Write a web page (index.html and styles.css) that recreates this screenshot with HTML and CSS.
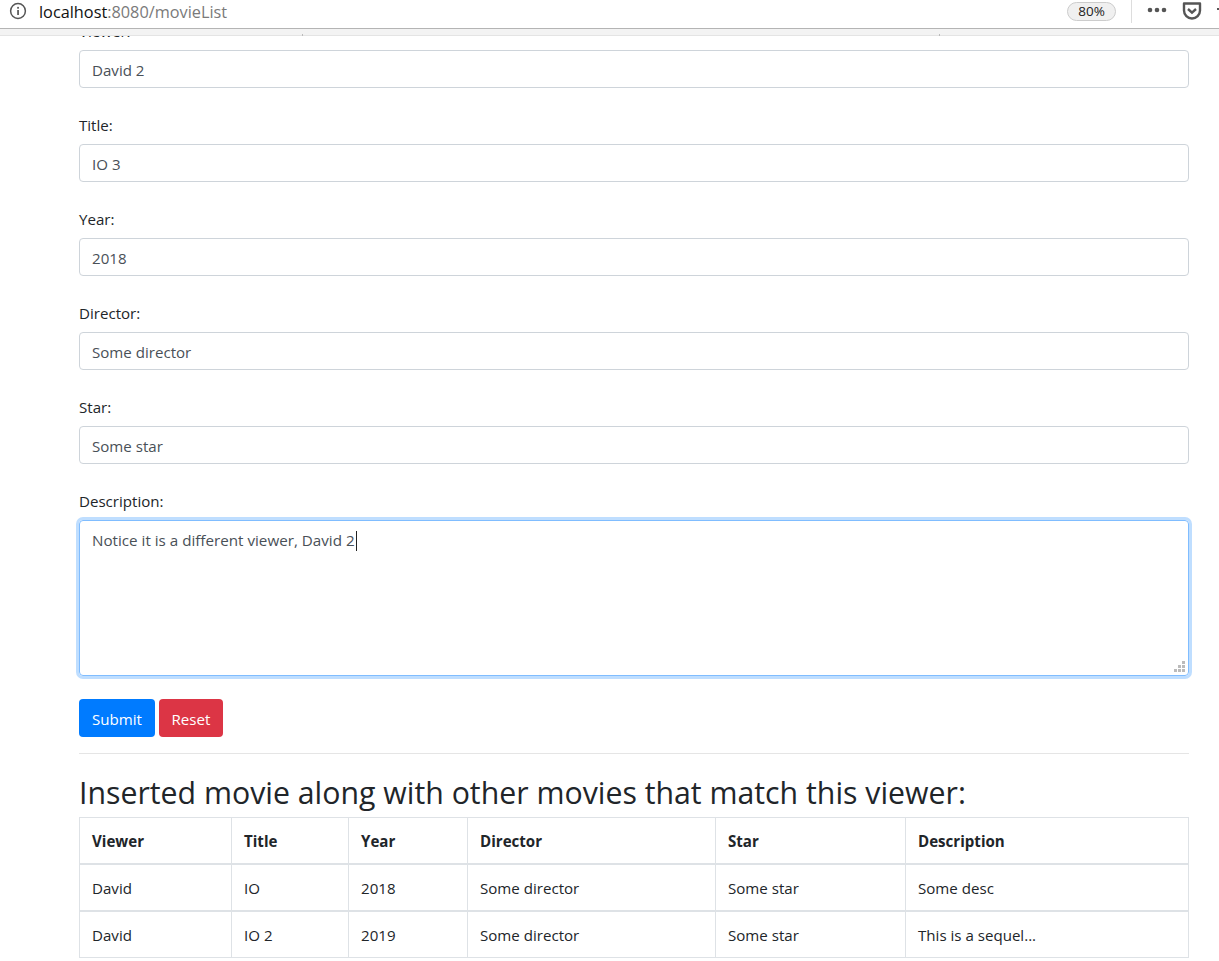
FILE: index.html
```html
<!DOCTYPE html>
<html lang="en">
<head>
    <meta charset="UTF-8">
    <title>Movie List</title>
    <link rel="stylesheet" href="styles.css">
</head>
<body>

<!-- Browser toolbar, sits over the scrolled page -->
<div class="toolbar">
    <svg class="infoIcon" width="18" height="18" viewBox="0 0 18 18">
        <circle cx="9" cy="9" r="7.4" fill="none" stroke="#555" stroke-width="1.5"/>
        <rect x="8.2" y="8" width="1.7" height="5" fill="#555"/>
        <rect x="8.2" y="4.9" width="1.7" height="1.8" fill="#555"/>
    </svg>
    <div class="url"><span class="urlHost">localhost</span>:8080/movieList</div>
    <div class="zoomBadge">80%</div>
    <div class="toolbarDivider"></div>
    <svg class="dots" width="20" height="6" viewBox="0 0 20 6">
        <circle cx="3" cy="3" r="2.3" fill="#555"/>
        <circle cx="10" cy="3" r="2.3" fill="#555"/>
        <circle cx="17" cy="3" r="2.3" fill="#555"/>
    </svg>
    <svg class="pocket" width="20" height="18" viewBox="0 0 20 18">
        <path d="M2 1.5h16v7a8 8 0 0 1-16 0z" fill="none" stroke="#555" stroke-width="2.4" stroke-linejoin="round"/>
        <path d="M6 7l4 3.6L14 7" fill="none" stroke="#555" stroke-width="2.4"/>
    </svg>
    <div class="moreDot"></div>
</div>
<div class="toolbarStrip">
    <span class="stripMark stripMarkLeft"></span>
    <span class="stripMark stripMarkRight"></span>
</div>

<main class="page">
    <form class="movieForm">
        <div class="formGroup">
            <label for="viewer">Viewer:</label>
            <input class="formControl" type="text" id="viewer" value="David 2">
        </div>
        <div class="formGroup">
            <label for="title">Title:</label>
            <input class="formControl" type="text" id="title" value="IO 3">
        </div>
        <div class="formGroup">
            <label for="year">Year:</label>
            <input class="formControl" type="text" id="year" value="2018">
        </div>
        <div class="formGroup">
            <label for="director">Director:</label>
            <input class="formControl" type="text" id="director" value="Some director">
        </div>
        <div class="formGroup">
            <label for="star">Star:</label>
            <input class="formControl" type="text" id="star" value="Some star">
        </div>
        <div class="formGroup formGroupLast">
            <label>Description:</label>
            <div class="textBox">
                <span class="textValue">Notice it is a different viewer, David 2</span><span class="caret"></span>
                <svg class="grip" width="11" height="11" viewBox="0 0 11 11">
                    <path d="M8 0h3v3H8zM4 4h3v3H4zM8 4h3v3H8zM0 8h3v3H0zM4 8h3v3H4zM8 8h3v3H8z" fill="#bbb"/>
                </svg>
            </div>
        </div>
        <div class="buttons">
            <button type="button" class="btn btnBlue">Submit</button>
            <button type="button" class="btn btnRed">Reset</button>
        </div>
    </form>

    <hr class="rule">

    <h3 class="heading">Inserted movie along with other movies that match this viewer:</h3>

    <table class="movieTable">
        <thead>
            <tr>
                <th class="colViewer">Viewer</th>
                <th class="colTitle">Title</th>
                <th class="colYear">Year</th>
                <th class="colDirector">Director</th>
                <th class="colStar">Star</th>
                <th>Description</th>
            </tr>
        </thead>
        <tbody>
            <tr class="firstRow">
                <td>David</td>
                <td>IO</td>
                <td>2018</td>
                <td>Some director</td>
                <td>Some star</td>
                <td>Some desc</td>
            </tr>
            <tr>
                <td>David</td>
                <td>IO 2</td>
                <td>2019</td>
                <td>Some director</td>
                <td>Some star</td>
                <td>This is a sequel...</td>
            </tr>
        </tbody>
    </table>
</main>

</body>
</html>
```

FILE: styles.css
```css
* {
    box-sizing: border-box;
}

html, body {
    height: 100%;
    margin: 0;
    overflow: hidden;
}

body {
    position: relative;
    background-color: #fff;
    color: #212529;
    font-family: "Open Sans", "Noto Sans", sans-serif;
    font-size: 15.1px;
    line-height: 24px;
}

.toolbar {
    position: absolute;
    top: 0;
    left: 0;
    right: 0;
    height: 29px;
    display: flex;
    align-items: center;
    padding-left: 9px;
    background-color: #fff;
    border-bottom: 1px solid #b4b4b4;
    z-index: 2;
}

.toolbarStrip {
    position: absolute;
    top: 29px;
    left: 0;
    right: 0;
    height: 7px;
    background-color: #f3f3f3;
    border-bottom: 1px solid #e4e4e4;
    z-index: 1;
}

.stripMark {
    position: absolute;
    bottom: -1px;
    width: 1px;
    height: 2px;
    background-color: #bbb;
}

.stripMarkLeft {
    left: 302px;
}

.stripMarkRight {
    left: 939px;
}

.infoIcon {
    margin-top: -6px;
}

.url {
    margin-left: 12px;
    margin-top: -4px;
    font-size: 16.3px;
    color: #7a7a7a;
    flex: 1;
}

.urlHost {
    color: #111;
}

.zoomBadge {
    width: 49px;
    height: 19px;
    margin-top: -6px;
    border: 1px solid #ccc;
    border-radius: 10px;
    background-color: #f0f0f0;
    font-size: 13.5px;
    line-height: 17px;
    text-align: center;
    color: #222;
}

.toolbarDivider {
    width: 1px;
    height: 24px;
    margin: -6px 0 0 15px;
    background-color: #ddd;
}

.dots {
    margin: -8px 0 0 15px;
}

.pocket {
    margin: -6px 0 0 15px;
}

.moreDot {
    width: 8px;
    height: 2px;
    margin: -10px -6px 0 15px;
    background-color: #555;
}

.page {
    padding: 18px 30px 0 79px;
}

.formGroup {
    margin-bottom: 24px;
}

.formGroupLast {
    margin-bottom: 23px;
}

.formGroup label {
    display: block;
    height: 24px;
    margin-bottom: 8px;
    line-height: 27px;
}

.formControl {
    display: block;
    width: 100%;
    height: 38px;
    padding: 7px 12px 5px;
    border: 1px solid #ced4da;
    border-radius: 4px;
    color: #495057;
    font: inherit;
}

.textBox {
    position: relative;
    height: 156px;
    padding: 7px 12px;
    border: 1px solid #80bdff;
    border-radius: 4px;
    box-shadow: 0 0 0 3px #bfdeff;
    color: #495057;
}

.textValue {
    font-size: 15.2px;
}

.caret {
    display: inline-block;
    width: 1px;
    height: 20px;
    margin-left: 1px;
    vertical-align: -5px;
    background-color: #222;
}

.grip {
    position: absolute;
    right: 3px;
    bottom: 3px;
}

.buttons {
    display: flex;
    gap: 4px;
}

.btn {
    height: 38px;
    padding: 2px 13px 0;
    border: none;
    border-radius: 4px;
    color: #fff;
    font: inherit;
}

.btnBlue {
    background-color: #007bff;
}

.btnRed {
    width: 64px;
    padding: 2px 0 0;
    background-color: #dc3545;
}

.rule {
    height: 1px;
    margin: 16px 0 0;
    border: none;
    background-color: #e5e5e5;
}

.heading {
    margin: 20px 0 5px;
    font-size: 30.27px;
    font-weight: 400;
    line-height: 38px;
}

.movieTable {
    width: 1110px;
    border-collapse: collapse;
    table-layout: fixed;
}

.movieTable th,
.movieTable td {
    height: 47px;
    padding: 2px 12px 0;
    border: 1px solid #dee2e6;
    text-align: left;
}

.movieTable thead th {
    height: 46px;
    border-bottom-width: 2px;
}

.movieTable .firstRow td {
    border-bottom-width: 2px;
}

.colViewer {
    width: 152px;
}

.colTitle {
    width: 117px;
}

.colYear {
    width: 119px;
}

.colDirector {
    width: 248px;
}

.colStar {
    width: 190px;
}
```
